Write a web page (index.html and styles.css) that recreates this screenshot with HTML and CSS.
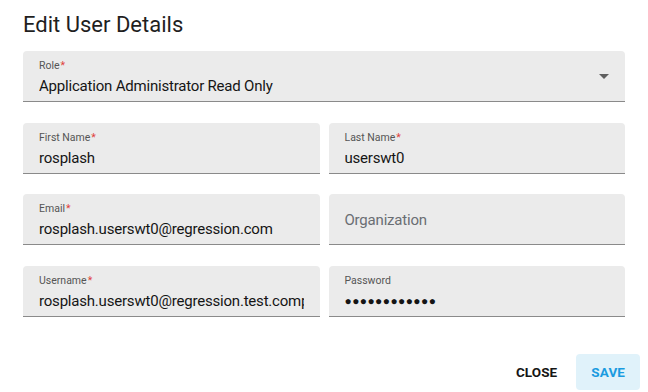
FILE: index.html
```html
<!DOCTYPE html>
<html>
<head>
<meta charset="utf-8">
<link rel="stylesheet" href="styles.css">
</head>
<body>
<div class="dialog">
  <h1 class="title">Edit User Details</h1>
  <div class="form">
    <div class="field field-wide field-select">
      <div class="field-body">
        <div class="label">Role<span class="req">*</span></div>
        <div class="value">Application Administrator Read Only</div>
      </div>
      <svg class="caret" width="10" height="5" viewBox="0 0 10 5"><path d="M0 0H10L5 5Z" fill="#5f5f5f"/></svg>
    </div>
    <div class="field">
      <div class="field-body">
        <div class="label">First Name<span class="req">*</span></div>
        <div class="value">rosplash</div>
      </div>
    </div>
    <div class="field">
      <div class="field-body">
        <div class="label">Last Name<span class="req">*</span></div>
        <div class="value">userswt0</div>
      </div>
    </div>
    <div class="field">
      <div class="field-body">
        <div class="label">Email<span class="req">*</span></div>
        <div class="value">rosplash.userswt0@regression.com</div>
      </div>
    </div>
    <div class="field field-empty">
      <div class="placeholder">Organization</div>
    </div>
    <div class="field">
      <div class="field-body">
        <div class="label">Username<span class="req">*</span></div>
        <div class="value clip">rosplash.userswt0@regression.test.company</div>
      </div>
    </div>
    <div class="field">
      <div class="field-body">
        <div class="label">Password</div>
        <div class="value dots">●●●●●●●●●●●●</div>
      </div>
    </div>
  </div>
  <div class="footer">
    <button class="btn btn-close">CLOSE</button>
    <button class="btn btn-save">SAVE</button>
  </div>
</div>
</body>
</html>
```
FILE: styles.css
```css
html, body {
  margin: 0;
  padding: 0;
  background: #ffffff;
}
body {
  font-family: Roboto, "Liberation Sans", sans-serif;
  color: #151515;
}
.dialog {
  width: 648px;
  height: 392px;
  box-sizing: border-box;
}
.title {
  margin: 0;
  padding: 12px 23px 0;
  font-size: 22px;
  line-height: 26px;
  font-weight: 400;
  color: #1f1f1f;
}
.form {
  display: grid;
  grid-template-columns: 1fr 1fr;
  gap: 20.6px 9px;
  padding: 13px 23px 0;
}
.field {
  height: 51px;
  box-sizing: border-box;
  background: #ebebeb;
  border-bottom: 1px solid #8a8a8a;
  border-radius: 4px 4px 0 0;
  display: flex;
  align-items: flex-start;
  padding: 0 16px;
  overflow: hidden;
}
.field-wide {
  grid-column: 1 / span 2;
}
.field-select {
  align-items: center;
}
.field-select .field-body {
  align-self: flex-start;
}
.field-body {
  flex: 1;
  min-width: 0;
  padding-top: 8px;
}
.label {
  font-size: 10.5px;
  line-height: 14px;
  margin-bottom: 3px;
  color: #555555;
}
.req {
  color: #e0403a;
  margin-left: 1px;
}
.value {
  font-size: 15px;
  line-height: 20px;
  letter-spacing: -0.2px;
  color: #151515;
  white-space: nowrap;
  overflow: hidden;
}
.dots {
  font-size: 12px;
  letter-spacing: 0.4px;
}
.caret {
  flex: none;
  display: block;
}
.field-empty {
  align-items: center;
  padding-top: 2px;
}
.placeholder {
  font-size: 15px;
  letter-spacing: -0.2px;
  color: #6a6e73;
}
.footer {
  display: flex;
  justify-content: flex-end;
  gap: 4px;
  padding: 37px 8px 0;
}
.btn {
  height: 36px;
  border: none;
  border-radius: 4px;
  padding: 0 15px;
  font-family: Roboto, "Liberation Sans", sans-serif;
  font-size: 13.5px;
  font-weight: 700;
  letter-spacing: 0.1px;
  background: transparent;
  cursor: pointer;
}
.btn-close {
  color: #151515;
}
.btn-save {
  background: #e0f2fa;
  color: #1a9be0;
}
```
